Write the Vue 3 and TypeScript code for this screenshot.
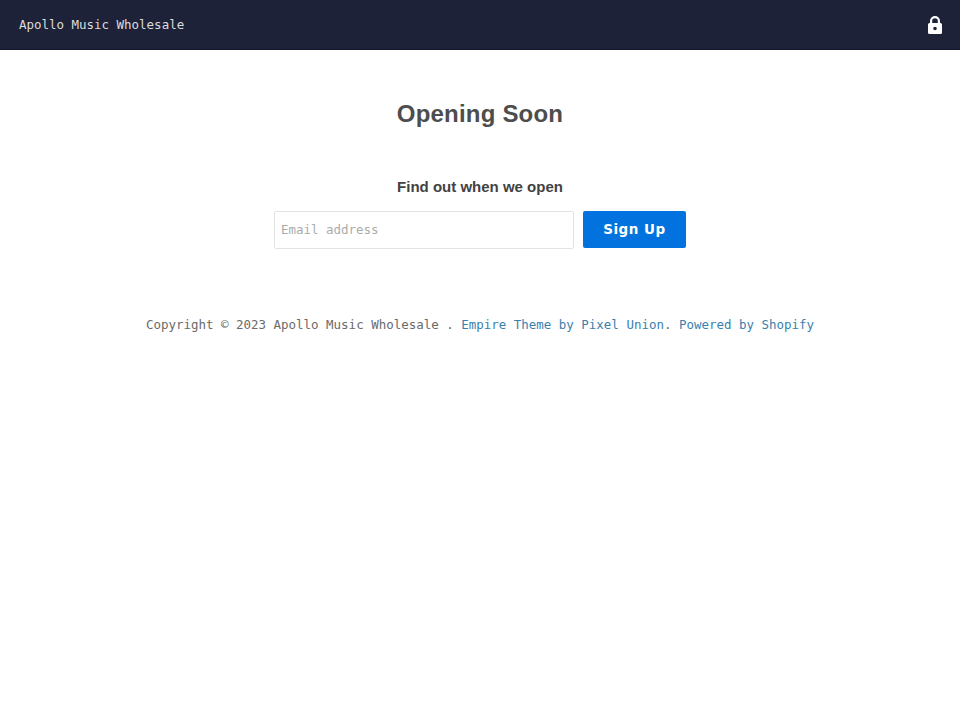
<script setup lang="ts">
const copyright = 'Copyright © 2023 Apollo Music Wholesale . '
</script>

<template>
  <div class="page">
    <header class="bar">
      <span class="brand">Apollo Music Wholesale</span>
      <svg class="lock" width="14" height="18" viewBox="0 0 14 18" aria-hidden="true">
        <path fill="#fff" fill-rule="evenodd" d="M2 7V5a5 5 0 0 1 10 0v2h.5A1.500 1.500 0 0 1 14 8.500v8a1.500 1.500 0 0 1-1.500 1.500h-11A1.500 1.500 0 0 1 0 16.500v-8A1.500 1.500 0 0 1 1.500 7H2zM4.200 7h5.600V5a2.800 2.800 0 0 0-5.600 0v2zM7 10.700a1.800 1.800 0 1 0 0 3.600 1.800 1.800 0 0 0 0-3.600z"/>
      </svg>
    </header>
    <main class="main">
      <h1 class="title">Opening Soon</h1>
      <h2 class="sub">Find out when we open</h2>
      <form class="form" @submit.prevent>
        <input class="email" type="email" placeholder="Email address" />
        <button class="btn" type="submit">Sign Up</button>
      </form>
      <p class="foot">{{ copyright }}<a href="#">Empire Theme by Pixel Union</a>. <a href="#">Powered by Shopify</a></p>
    </main>
  </div>
</template>

<style>
body { background: #fff; }
</style>

<style scoped>
.page { font-family: "DejaVu Sans Mono", monospace; font-size: 12.47px; color: #6a6a6a; }
.bar { height: 49px; background: #1e2239; border-bottom: 1px solid #15182a; display: flex; align-items: center; justify-content: space-between; padding: 0 18px 0 19px; color: #dcdcdc; }
.brand { line-height: 20px; }
.lock { display: block; }
.main { display: flex; flex-direction: column; align-items: center; }
.title { margin: 48px 0 0; font: bold 24px/32px "Liberation Sans", sans-serif; letter-spacing: 0.2px; color: #4d4d4d; }
.sub { margin: 47px 0 0; font: bold 15px/20px "Liberation Sans", sans-serif; color: #424242; }
.form { display: flex; gap: 9px; margin-top: 14px; align-items: flex-start; }
.email { width: 300px; height: 38px; box-sizing: border-box; border: 1px solid #e3e3e3; border-radius: 2px; padding: 0 6px 2px; font: 12.47px "DejaVu Sans Mono", monospace; color: #4d4d4d; background: #fff; outline: none; }
.email::placeholder { color: #ababab; opacity: 1; }
.btn { width: 103px; height: 37px; border: 0; border-radius: 2px; background: #0272de; color: #fff; font: bold 13.5px "DejaVu Sans", sans-serif; letter-spacing: 0.5px; padding: 0 0 2px; }
.foot { margin: 66px 0 0; line-height: 20px; white-space: pre; }
.foot a { color: #3a7fae; text-decoration: none; }
</style>
